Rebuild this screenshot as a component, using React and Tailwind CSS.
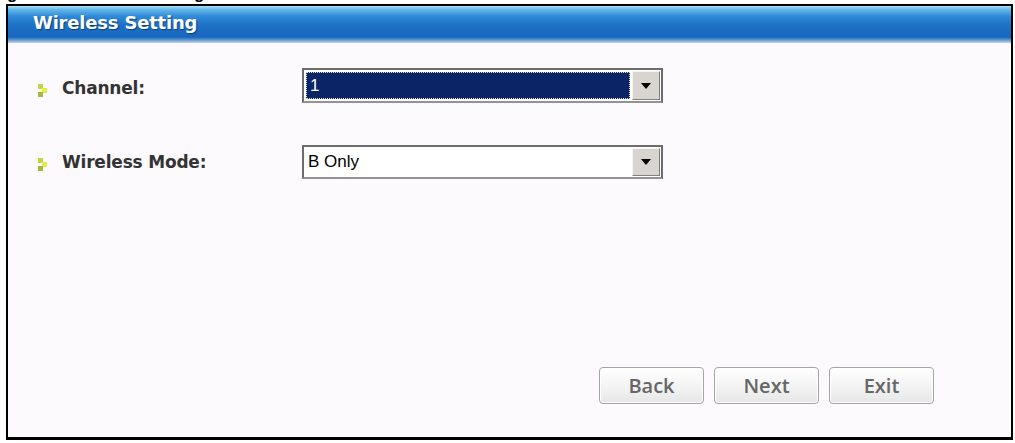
import React from 'react';

const Bullet = () => (
  <svg width="9" height="13" viewBox="0 0 9 13" className="mt-[3px] shrink-0">
    <rect x="0" y="0" width="5" height="5" fill="#c3d44a" />
    <rect x="4" y="4" width="5" height="5" fill="#e2f03a" />
    <rect x="0" y="8" width="5" height="5" fill="#a6b843" />
  </svg>
);

const Arrow = () => (
  <svg width="10" height="6" viewBox="0 0 10 6">
    <polygon points="0,0 10,0 5,6" fill="#000" />
  </svg>
);

const Select = ({ value, focused }) => (
  <div className="flex w-[361px] h-full border-2 border-[#6c6c6c] border-b-[#939393] bg-white">
    <div className="flex-1 flex p-[2px]">
      {focused ? (
        <div className="flex-1 flex items-center bg-[#0b2466] border border-dotted border-[#e8e4c8] pl-[3px] text-white">
          {value}
        </div>
      ) : (
        <div className="flex-1 flex items-center pl-[2px] text-black">{value}</div>
      )}
    </div>
    <div className="w-[28px] my-[1px] mr-[1px] flex items-center justify-center bg-[#d8d5d0] border border-t-[#f4f4f4] border-l-[#f4f4f4] border-r-[#808080] border-b-[#808080]">
      <Arrow />
    </div>
  </div>
);

const Label = ({ text }) => (
  <div className="flex items-center gap-[15px] w-[294px] pl-[30px]">
    <Bullet />
    <span className="font-['DejaVu_Sans',sans-serif] font-bold text-[17px] tracking-[-0.2px] text-[#333333]">{text}</span>
  </div>
);

const WizButton = ({ children }) => (
  <button className="w-[105px] h-[37px] rounded-[4px] border border-[#a4a4a4] shadow-[inset_0_0_0_1px_#ffffff] bg-[linear-gradient(to_bottom,#ffffff,#f2f2f2_60%,#e6e6e6)] flex items-center justify-center font-['Open_Sans',sans-serif] font-semibold text-[20px] leading-none text-[#666666]">
    {children}
  </button>
);

export default function App() {
  return (
    <div className="w-[1015px] h-[443px] bg-white overflow-hidden font-['Liberation_Sans',Arial,sans-serif]">
      <div className="h-[4px] overflow-hidden">
        <div className="mt-[-15px] ml-[-8px] whitespace-nowrap font-bold text-[17px] leading-none text-black">
          Figure 46 Wireless Setting
        </div>
      </div>
      <div className="ml-[6px] w-[1007px] h-[436px] border-2 border-b-[3px] border-black flex flex-col bg-[#fcfafd]">
        <div className="h-[37px] shrink-0 pt-[6px] pl-[25px] bg-[linear-gradient(to_bottom,#a9def4_0%,#62b7ea_10%,#2f8ad8_28%,#1d71c7_52%,#1767bd_84%,#5a93d0_91%,#c9d4e0_100%)]">
          <span className="font-['DejaVu_Sans',sans-serif] font-bold text-[18px] leading-[22px] text-white tracking-[-0.2px] [text-shadow:1px_1px_1px_#0d3f7a]">
            Wireless Setting
          </span>
        </div>

        <div className="flex-1 flex flex-col pt-[25px]">
          <div className="flex items-center h-[35px]">
            <div className="pt-[7px]">
              <Label text="Channel:" />
            </div>
            <div className="h-full text-[17px]">
              <Select value="1" focused />
            </div>
          </div>

          <div className="flex items-center h-[34px] mt-[42px]">
            <div className="pt-[2px]">
              <Label text="Wireless Mode:" />
            </div>
            <div className="h-full text-[17px]">
              <Select value="B Only" />
            </div>
          </div>

          <div className="flex justify-end gap-[10px] pr-[77px] mt-[188px]">
            <WizButton>Back</WizButton>
            <WizButton>Next</WizButton>
            <WizButton>Exit</WizButton>
          </div>
        </div>
      </div>
    </div>
  );
}
